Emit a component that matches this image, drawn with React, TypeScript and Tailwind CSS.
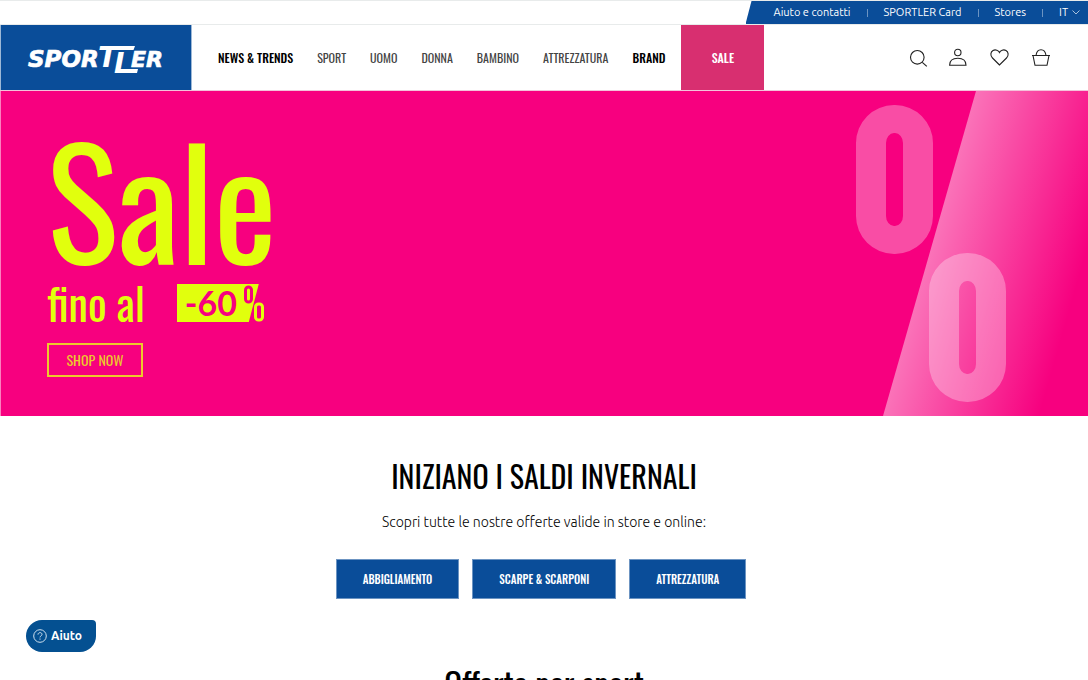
import type { ReactNode } from "react";
import { clsx } from "clsx";

const topLinks = ["Aiuto e contatti", "SPORTLER Card", "Stores"];

const navItems = [
  { label: "News & Trends", strong: true },
  { label: "Sport" },
  { label: "Uomo" },
  { label: "Donna" },
  { label: "Bambino" },
  { label: "Attrezzatura" },
  { label: "Brand", strong: true },
];

const saleCategories = ["Abbigliamento", "Scarpe & Scarponi", "Attrezzatura"];

function Logo() {
  return (
    <svg viewBox="0 0 140 48" className="h-12 w-[140px] fill-white" role="img" aria-label="Sportler">
      <text
        x="1"
        y="33"
        fontFamily="DejaVu Sans"
        fontWeight="700"
        fontStyle="italic"
        fontSize="23"
        stroke="white"
        strokeWidth="0.7"
      >
        SPOR
        <tspan x="71" fontSize="28" strokeWidth="0">
          T
        </tspan>
        <tspan x="87" dy="6" fontSize="28" strokeWidth="0">
          L
        </tspan>
        <tspan x="104" dy="-6" fontSize="22">
          ER
        </tspan>
      </text>
      <path d="M76 12h32l-1.500 4H74zM90 35h21l-1 4H89z" />
    </svg>
  );
}

function TopBar() {
  return (
    <div className="flex h-[25px] justify-end border-y border-y-[#e8ebeb]">
      <div className="flex items-center bg-[#0a4d99] pr-2 pl-7 text-[11px] text-white [clip-path:polygon(6px_0,100%_0,100%_100%,0_100%)]">
        {topLinks.map((label) => (
          <span key={label} className="flex items-center">
            <a href="#">{label}</a>
            <span className="mx-4 h-2 w-px bg-[#6c94c2]" />
          </span>
        ))}
        <button type="button" className="flex items-center gap-1">
          IT
          <svg viewBox="0 0 8 5" className="h-[5px] w-2 fill-none stroke-[#a9c1dc]">
            <path d="m.5.5 3.500 3.500 3.500-3.500" />
          </svg>
        </button>
      </div>
    </div>
  );
}

function IconButton({ label, children }: { label: string; children: ReactNode }) {
  return (
    <button type="button" aria-label={label}>
      <svg viewBox="0 0 20 20" className="size-5 fill-none stroke-[#222]" strokeWidth="1.100">
        {children}
      </svg>
    </button>
  );
}

function Header() {
  return (
    <header className="flex h-[66px] items-stretch border-b border-[#f3c3da]">
      <a href="#" className="flex w-48 items-center border-x border-[#9db8d6] bg-[#0a4d99] pl-[26px]">
        <Logo />
      </a>
      <nav className="flex items-center gap-6 pl-[26px] font-['Oswald'] text-[12px] text-[#444] uppercase">
        {navItems.map(({ label, strong }) => (
          <a key={label} href="#" className={clsx(strong && "font-medium text-black")}>
            {label}
          </a>
        ))}
      </nav>
      <a
        href="#"
        className="ml-4 flex w-[83px] items-center justify-center bg-[#d82f70] font-['Oswald'] text-[12px] font-medium text-white uppercase"
      >
        Sale
      </a>
      <div className="ml-auto flex items-center gap-[21px] pr-[37px]">
        <IconButton label="Cerca">
          <circle cx="9.300" cy="9.300" r="6.800" />
          <path d="m14.300 14.300 4.500 4" />
        </IconButton>
        <IconButton label="Account">
          <circle cx="8.800" cy="4.500" r="3.200" />
          <path d="M.6 17.300c0-4.500 3.200-7 8.200-7s8.200 2.500 8.200 7z" />
        </IconButton>
        <IconButton label="Preferiti">
          <path d="M9.500 17 2.500 10C0 7.500.5 4 3 2.500S8.500 2.500 9.500 4.500c1-2 4-3.500 6.500-2S19 7.500 16.500 10z" />
        </IconButton>
        <IconButton label="Carrello">
          <path d="M1 7.500h18M2 7.500l2 9.800h12l2-9.800M5 7.500C5.500 3.800 7.500 1.800 10 1.800s4.500 2 5 5.700" />
        </IconButton>
      </div>
    </header>
  );
}

function OfferTag() {
  return (
    <span className="relative flex h-[38px] w-[88px] items-center">
      <span className="absolute inset-0 bg-[#e1ff0d] [clip-path:polygon(0_0,82px_0,72px_100%,0_100%)]" />
      <span className="relative pl-2 font-['Lato'] text-[34px] leading-[38px] font-bold text-[#f7007f]">-60</span>
      <svg viewBox="0 0 88 38" className="absolute inset-0 fill-none" strokeWidth="3">
        <rect x="68.500" y="3" width="6" height="15" rx="3" className="stroke-[#f7007f]" />
        <rect x="78.500" y="20" width="7" height="16" rx="3" className="stroke-[#e1ff0d]" />
      </svg>
    </span>
  );
}

function Hero() {
  return (
    <section className="relative min-h-[325px] overflow-hidden border-l border-[#fb80bf] bg-[#f7007f] pl-[46px]">
      <div className="absolute inset-y-0 right-0 w-[205px] bg-linear-[106deg,rgba(255,255,255,0.45)_89px,transparent_240px] [clip-path:polygon(93px_0,100%_0,100%_100%,0_100%)]" />
      <div className="absolute top-3.5 right-[155px] h-[149px] w-[77px] rounded-[38px] border-x-[30px] border-y-[28px] border-white/30" />
      <div className="absolute right-[82px] bottom-3.5 h-[149px] w-[77px] rounded-[38px] border-x-[30px] border-y-[28px] border-white/30" />
      <div className="relative flex flex-col items-start text-[#e1ff0d]">
        <h1 className="pt-6 font-['Oswald'] text-[150px] leading-[164px]">Sale</h1>
        <p className="flex items-center gap-8 font-['Oswald'] text-[44px] leading-[48px]">
          <span>fino al</span>
          <OfferTag />
        </p>
        <a
          href="#"
          className="mt-4 flex h-[34px] w-24 items-center justify-center border-2 border-[#ecc92c] font-['Oswald'] text-sm text-[#ecc92c]"
        >
          SHOP NOW
        </a>
      </div>
    </section>
  );
}

export default function App() {
  return (
    <div className="h-screen overflow-hidden bg-white font-['Ubuntu','Noto_Sans',sans-serif] text-black">
      <TopBar />
      <Header />
      <main>
        <Hero />
        <section className="flex flex-col items-center pt-9">
          <h2 className="font-['Oswald'] text-[30px] leading-[48px]">INIZIANO I SALDI INVERNALI</h2>
          <p className="mt-3 text-[14px] leading-5 font-light">Scopri tutte le nostre offerte valide in store e online:</p>
          <div className="mt-[27px] flex gap-[13px] pr-1.5">
            {saleCategories.map((label) => (
              <a
                key={label}
                href="#"
                className="flex h-10 items-center border border-[#6c94c2] bg-[#0a4d99] px-[26px] font-['Oswald'] text-[11px] font-medium text-white uppercase"
              >
                {label}
              </a>
            ))}
          </div>
          <h2 className="mt-[60px] font-['Oswald'] text-[33px] leading-[48px]">Offerte per sport</h2>
        </section>
      </main>
      <button
        type="button"
        className="fixed bottom-7 left-[26px] flex h-8 w-[70px] items-center gap-1 rounded-[16px] rounded-tr-[4px] bg-[#045091] pl-[7px] text-[12px] font-bold text-white"
      >
        <svg viewBox="0 0 14 14" className="size-3.5 fill-none stroke-[#cfe0ee]">
          <circle cx="7" cy="7" r="6.300" />
          <path d="M5 5.600c0-2.600 4-2.600 4-.2 0 1.500-2 1.500-2 3M7 9.500v1.200" />
        </svg>
        Aiuto
      </button>
    </div>
  );
}
